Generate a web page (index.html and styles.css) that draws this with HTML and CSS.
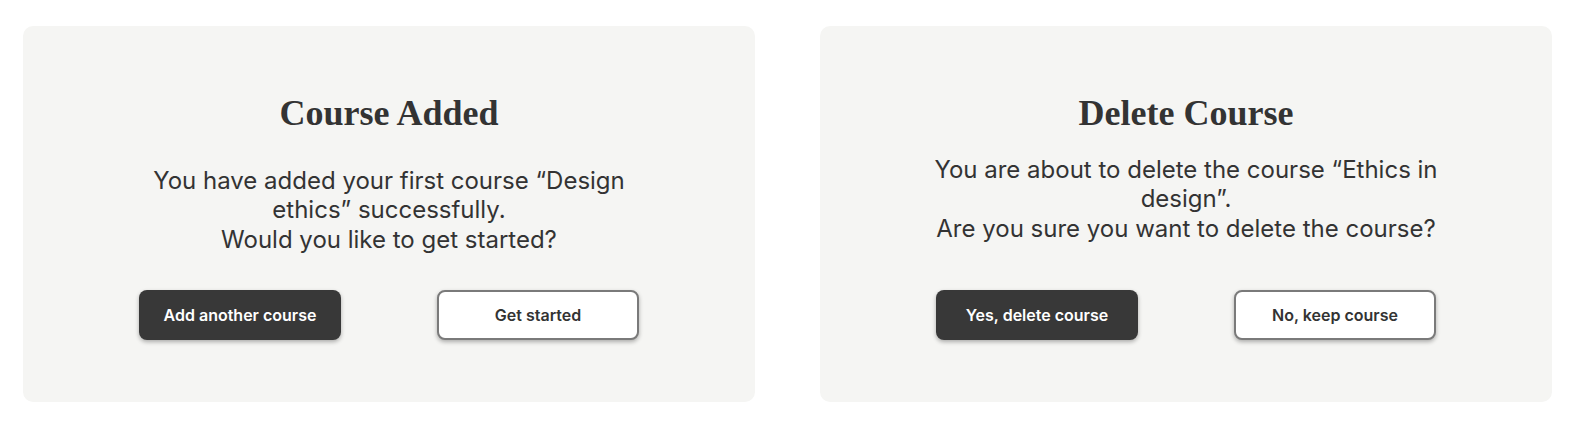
FILE: index.html
```html
<!DOCTYPE html>
<html lang="en">
<head>
<meta charset="utf-8">
<title>Dialogs</title>
<link rel="stylesheet" href="styles.css">
</head>
<body>
<main class="page">
  <section class="card">
    <h2 class="card-title">Course Added</h2>
    <p class="card-text card-text--low">You have added your first course “Design ethics” successfully.<br>Would you like to get started?</p>
    <div class="actions">
      <button class="btn btn-primary">Add another course</button>
      <button class="btn btn-secondary">Get started</button>
    </div>
  </section>
  <section class="card">
    <h2 class="card-title">Delete Course</h2>
    <p class="card-text">You are about to delete the course “Ethics in design”.<br>Are you sure you want to delete the course?</p>
    <div class="actions">
      <button class="btn btn-primary">Yes, delete course</button>
      <button class="btn btn-secondary">No, keep course</button>
    </div>
  </section>
</main>
</body>
</html>
```
FILE: styles.css
```css
* { box-sizing: border-box; }
html, body { margin: 0; background: #ffffff; overflow: hidden; }
body { font-family: Inter, "Noto Sans", sans-serif; color: #333333; }

.page {
  width: 1582px;
  height: 427px;
  display: flex;
  align-items: flex-start;
  gap: 65px;
  padding: 26px 23px 0;
  overflow: hidden;
}

.card {
  flex: 0 0 732px;
  width: 732px;
  height: 376px;
  background: #f5f5f3;
  border-radius: 10px;
  display: flex;
  flex-direction: column;
  align-items: center;
  padding-top: 65px;
}

.card-title {
  margin: 0;
  font-family: "Liberation Serif", "DejaVu Serif", serif;
  font-weight: 700;
  font-size: 36px;
  line-height: 44px;
  color: #333333;
}

.card-text {
  margin: 20px 0 0;
  max-width: 526px;
  text-align: center;
  font-size: 24px;
  line-height: 29.3px;
  color: #333333;
  height: 88px;
}
.card-text--low { margin-top: 31px; margin-bottom: -11px; }

.actions {
  margin-top: 47px;
  display: flex;
  gap: 96px;
}

.btn {
  width: 202px;
  height: 50px;
  border-radius: 8px;
  font-family: Inter, "Noto Sans", sans-serif;
  font-size: 16px;
  font-weight: 600;
  cursor: pointer;
  box-shadow: 0 2px 4px rgba(0, 0, 0, 0.3);
}
.btn-primary {
  background: #383838;
  color: #ffffff;
  border: none;
}
.btn-secondary {
  background: #ffffff;
  color: #333333;
  border: 2px solid #7a7a7a;
}
```
